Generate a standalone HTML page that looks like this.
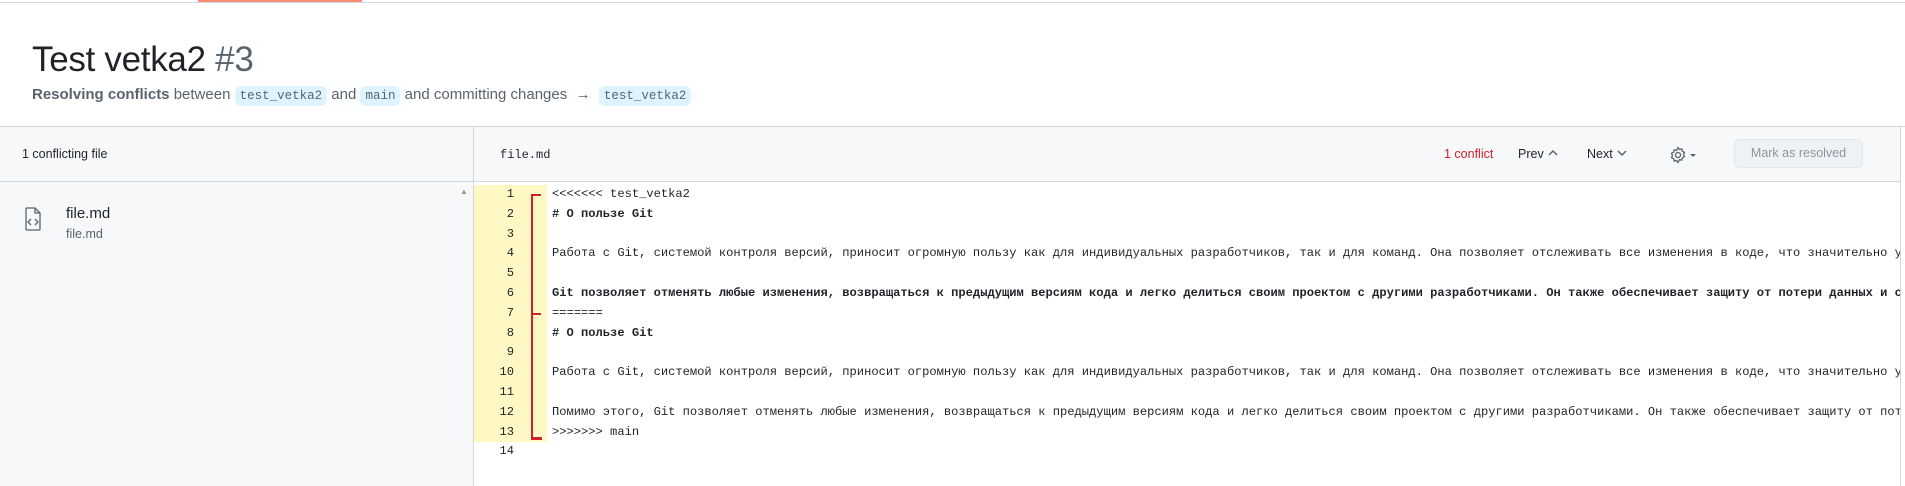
<!DOCTYPE html>
<html><head><meta charset="utf-8"><style>
*{box-sizing:border-box;margin:0;padding:0}
body{width:1905px;height:486px;overflow:hidden;background:#fff;font-family:"Liberation Sans",sans-serif;color:#1f2328;position:relative}
.top{position:absolute;left:0;top:0;width:1905px;height:3px;border-bottom:1px solid #d0d7de}
.orange{position:absolute;left:198px;top:0;width:164px;height:2px;background:#fd8c73}
h1{position:absolute;left:32px;top:40px;font-size:35px;font-weight:400;letter-spacing:-0.3px}
h1 span{color:#59636e}
.sub{position:absolute;left:32px;top:86px;font-size:15px;color:#59636e;white-space:nowrap}
.sub b{color:#59636e;font-weight:600}
.br{font-family:"Liberation Mono",monospace;font-size:12.5px;background:#ddf4ff;border-radius:6px;padding:3px 5px;color:#59636e}
.hr{position:absolute;left:0;top:126px;width:1905px;border-top:1px solid #d0d7de}
.left{position:absolute;left:0;top:127px;width:474px;height:359px;background:#f6f8fa;border-right:1px solid #d0d7de}
.lh{height:55px;border-bottom:1px solid #d0d7de;font-size:12.5px;padding:20px 0 0 22px;color:#1f2328}
.rh{position:absolute;left:474px;top:127px;width:1427px;height:55px;background:#f6f8fa;border-bottom:1px solid #d0d7de}
.rborder{position:absolute;left:1900px;top:127px;width:1px;height:359px;background:#d0d7de}
.code{position:absolute;left:474px;top:185px;width:1426px;height:301px;overflow:hidden}
.row{height:19.8px;line-height:19.8px;white-space:pre;font-family:"Liberation Mono",monospace;font-size:12.1px;position:relative}
.ln{position:absolute;left:0;width:73px;height:19.8px;text-align:right;padding-right:33px;color:#1f2328}
.y .ln{background:#fff8c5}
.tx{position:absolute;left:78px}
.b .tx{font-weight:bold}
</style></head><body>
<div class="top"></div><div class="orange"></div>
<h1>Test vetka2 <span>#3</span></h1>
<div class="sub"><b>Resolving conflicts</b> between <span class="br">test_vetka2</span> and <span class="br">main</span> and committing changes &nbsp;→&nbsp; <span class="br">test_vetka2</span></div>
<div class="hr"></div>
<div class="left">
<div class="lh">1 conflicting file</div>
<div style="position:absolute;left:460px;top:60px;font-size:8px;color:#999">▲</div>
<svg style="position:absolute;left:24px;top:80px" width="18" height="24" viewBox="0 0 18 24" fill="none" stroke="#59636e" stroke-width="1.3"><path d="M2 1h9l5 5v16a1 1 0 0 1-1 1H3a1 1 0 0 1-1-1V2a1 1 0 0 1 1-1z"/><path d="M11 1v5h5"/><path d="M7 12l-3 3 3 3M11 12l3 3-3 3"/></svg>
<div style="position:absolute;left:66px;top:78px;font-size:15px;color:#1f2328">file.md</div>
<div style="position:absolute;left:66px;top:100px;font-size:12.5px;color:#59636e">file.md</div>
</div>
<div class="rh">
<div style="position:absolute;left:26px;top:21px;font-family:'Liberation Mono',monospace;font-size:12px">file.md</div>
<div style="position:absolute;left:970px;top:20px;font-size:12.5px;color:#cf222e">1 conflict</div>
<div style="position:absolute;left:1044px;top:20px;font-size:12.5px">Prev <svg width="12" height="10" viewBox="0 0 12 10" fill="none" stroke="#59636e" stroke-width="1.5"><path d="M2 7l4-4 4 4"/></svg></div>
<div style="position:absolute;left:1113px;top:20px;font-size:12.5px">Next <svg width="12" height="10" viewBox="0 0 12 10" fill="none" stroke="#59636e" stroke-width="1.5"><path d="M2 3l4 4 4-4"/></svg></div>
<svg style="position:absolute;left:1196px;top:19px" width="28" height="18" viewBox="0 0 28 18" fill="none" stroke="#59636e" stroke-width="1.3"><circle cx="8" cy="9" r="2.5"/><path d="M8 1.5l1.5 2 2.3-.6.6 2.3 2.1 1.2-1 2.1 1 2.1-2.1 1.2-.6 2.3-2.3-.6L8 16.5l-1.5-2-2.3.6-.6-2.3L1.5 11.6l1-2.1-1-2.1 2.1-1.2.6-2.3 2.3.6z"/><path d="M20 8h6l-3 3z" fill="#59636e" stroke="none"/></svg>
<div style="position:absolute;left:1260px;top:12px;width:129px;height:29px;border:1px solid #e3e6ea;border-radius:6px;background:#eff2f5;color:#8c959f;font-size:12.5px;text-align:center;line-height:27px">Mark as resolved</div>
</div>
<div class="rborder"></div>
<div class="code">
<div class="row y"><span class="ln">1</span><span class="tx">&lt;&lt;&lt;&lt;&lt;&lt;&lt; test_vetka2</span></div>
<div class="row y b"><span class="ln">2</span><span class="tx"># О пользе Git</span></div>
<div class="row y"><span class="ln">3</span></div>
<div class="row y"><span class="ln">4</span><span class="tx">Работа с Git, системой контроля версий, приносит огромную пользу как для индивидуальных разработчиков, так и для команд. Она позволяет отслеживать все изменения в коде, что значительно упрощает работу</span></div>
<div class="row y"><span class="ln">5</span></div>
<div class="row y b"><span class="ln">6</span><span class="tx">Git позволяет отменять любые изменения, возвращаться к предыдущим версиям кода и легко делиться своим проектом с другими разработчиками. Он также обеспечивает защиту от потери данных и сбоев</span></div>
<div class="row y"><span class="ln">7</span><span class="tx">=======</span></div>
<div class="row y b"><span class="ln">8</span><span class="tx"># О пользе Git</span></div>
<div class="row y"><span class="ln">9</span></div>
<div class="row y"><span class="ln">10</span><span class="tx">Работа с Git, системой контроля версий, приносит огромную пользу как для индивидуальных разработчиков, так и для команд. Она позволяет отслеживать все изменения в коде, что значительно упрощает работу</span></div>
<div class="row y"><span class="ln">11</span></div>
<div class="row y"><span class="ln">12</span><span class="tx">Помимо этого, Git позволяет отменять любые изменения, возвращаться к предыдущим версиям кода и легко делиться своим проектом с другими разработчиками. Он также обеспечивает защиту от потери данных</span></div>
<div class="row y"><span class="ln">13</span><span class="tx">&gt;&gt;&gt;&gt;&gt;&gt;&gt; main</span></div>
<div class="row"><span class="ln">14</span></div>
<div style="position:absolute;left:57px;top:9px;width:1.5px;height:245px;background:#cf222e"></div>
<div style="position:absolute;left:57px;top:9px;width:10px;height:1.5px;background:#cf222e"></div>
<div style="position:absolute;left:57px;top:128px;width:10px;height:1.5px;background:#cf222e"></div>
<div style="position:absolute;left:57px;top:252px;width:11px;height:2.5px;background:#cf222e"></div>
</div>
</body></html>
